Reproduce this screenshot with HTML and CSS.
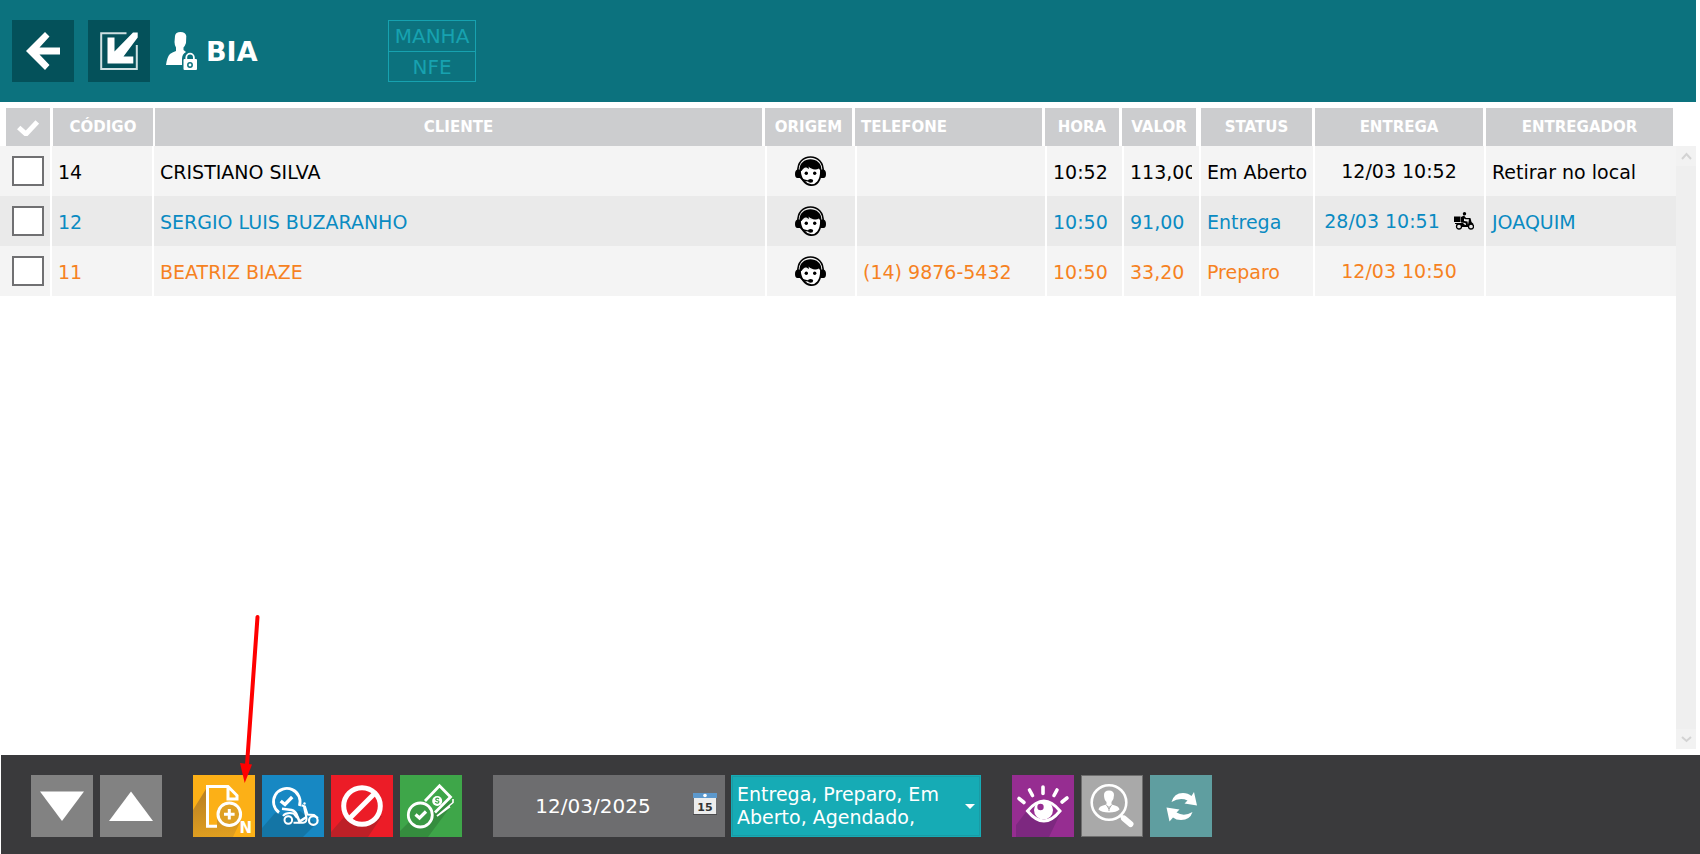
FILE: index.html
```html
<!DOCTYPE html>
<html lang="pt-BR">
<head>
<meta charset="utf-8">
<title>Pedidos</title>
<link rel="stylesheet" href="styles.css">
</head>
<body>
<svg class="defs" aria-hidden="true">
  <symbol id="attendant" viewBox="0 0 31 32">
    <path d="M3 16C1 -4 30 -4 28 16" fill="none" stroke="#000" stroke-width="1.600"/>
    <path d="M5 14C4.500 31 26.500 37 26 14" fill="#fff" stroke="#000" stroke-width="1.800"/>
    <path d="M4.800 15C3.500 7 10 3.200 15.500 3.200S27.500 7 26.200 15C25 14 24.500 13.500 24 12.500C20 14.500 16 13 13.500 10.500C14 12 14 12.500 13.500 13C10.500 10.500 9 11.500 6.500 15Z"/>
    <path d="M5 13.500v8.500H2.500Q0 22 0 18t2.500-4.500ZM26 13.500v8.500h2.500Q31 22 31 18t-2.500-4.500Z"/>
    <circle cx="11.300" cy="17.300" r="1.700"/><circle cx="19.700" cy="17.300" r="1.700"/>
    <path d="M5 21Q8 25.200 14 24.800" fill="none" stroke="#000" stroke-width="1.300"/>
    <ellipse cx="15.600" cy="24.800" rx="2.600" ry="1.900"/>
  </symbol>
</svg>

<header class="topbar">
  <button class="topbtn" aria-label="Voltar">
    <svg viewBox="0 0 62 62"><path fill="#fff" d="M14 31L33 12l4.500 4.500L27.500 27.500H48v7H27.500L37.500 45 33 50Z"/></svg>
  </button>
  <button class="topbtn" aria-label="Restaurar">
    <svg viewBox="0 0 62 62"><path d="M38.500 13.200H13.200V49H48.800V25" fill="none" stroke="#cfe0e2" stroke-width="2"/><path fill="#fff" d="M19.500 17.500h7v14L45 12.500h4.700V17.500L35.500 36.500h9.800v7H19.500Z"/></svg>
  </button>
  <div class="user">
    <svg class="user-icon" viewBox="0 0 31 38" aria-hidden="true">
      <path fill="#fff" d="M9 4Q9.500 0 14.500 0T20.300 4L20 11Q19 14 17.500 15.500V18L20 20Q16 22 16 27v6H0Q1 25 4 22Q6 20.500 10 19V15.500Q8.500 13 8.500 10Z"/>
      <path d="M20.300 28v-2.500a3.800 3.800 0 0 1 7.600 0V28" fill="none" stroke="#fff" stroke-width="1.800"/>
      <rect x="17.500" y="27" width="13.500" height="11" rx="1" fill="#fff"/>
      <circle cx="24" cy="33" r="2.200" fill="none" stroke="#0c727e" stroke-width="1.500"/>
    </svg>
    <strong class="user-name">BIA</strong>
  </div>
  <div class="shift"><span>MANHA</span><span>NFE</span></div>
</header>

<main class="main">
  <table class="orders">
    <colgroup>
      <col class="c-check"><col class="c-code"><col><col class="c-origin"><col class="c-wide"><col class="c-small"><col class="c-small"><col class="c-status"><col class="c-delivery"><col class="c-wide">
    </colgroup>
    <thead>
      <tr>
        <th><span class="h h-check"><svg viewBox="0 0 22 16" role="img" aria-label="Selecionar"><path d="M1.700 7.500L9 14L20.300 2" fill="none" stroke="#fff" stroke-width="5"/></svg></span></th>
        <th><span class="h h-code">CÓDIGO</span></th>
        <th><span class="h h-client">CLIENTE</span></th>
        <th><span class="h h-mid">ORIGEM</span></th>
        <th><span class="h h-mid h-left">TELEFONE</span></th>
        <th><span class="h h-mid">HORA</span></th>
        <th><span class="h h-mid">VALOR</span></th>
        <th><span class="h">STATUS</span></th>
        <th><span class="h">ENTREGA</span></th>
        <th><span class="h">ENTREGADOR</span></th>
      </tr>
    </thead>
    <tbody>
      <tr class="open">
        <td class="pick"><input type="checkbox" aria-label="Pedido 14"></td><td>14</td><td>CRISTIANO SILVA</td>
        <td class="origin"><svg><use href="#attendant"/></svg></td><td></td><td>10:52</td><td><span class="clip">113,00</span></td><td>Em Aberto</td>
        <td class="when"><span class="when-in">12/03 10:52</span></td><td>Retirar no local</td>
      </tr>
      <tr class="shipping">
        <td class="pick"><input type="checkbox" aria-label="Pedido 12"></td><td>12</td><td>SERGIO LUIS BUZARANHO</td>
        <td class="origin"><svg><use href="#attendant"/></svg></td><td></td><td>10:50</td><td><span class="clip">91,00</span></td><td>Entrega</td>
        <td class="when"><span class="when-in">28/03 10:51
          <svg class="moto" viewBox="0 0 20 18" aria-hidden="true"><path d="M0 4.500h6.500V10H0ZM7 5L10 3.500 12 6h4v1.300h-4.500L10 6.500V9l3.500.5.500 3.500h-2l-.5-2L7 10.500ZM1 11h8l2 2h3l1-6 1.500-1 1 4 2 2-2.500.5L15 15H7.500L6 12H1Z"/><circle cx="10.500" cy="1.700" r="1.700"/><circle cx="5" cy="14.500" r="2.500" fill="#eaeaea" stroke="#000" stroke-width="1.300"/><circle cx="17" cy="14.500" r="2.500" fill="#eaeaea" stroke="#000" stroke-width="1.300"/></svg>
        </span></td><td>JOAQUIM</td>
      </tr>
      <tr class="prep">
        <td class="pick"><input type="checkbox" aria-label="Pedido 11"></td><td>11</td><td>BEATRIZ BIAZE</td>
        <td class="origin"><svg><use href="#attendant"/></svg></td><td>(14) 9876-5432</td><td>10:50</td><td><span class="clip">33,20</span></td><td>Preparo</td>
        <td class="when"><span class="when-in">12/03 10:50</span></td><td></td>
      </tr>
    </tbody>
  </table>
  <div class="scrollbar" aria-hidden="true">
    <svg viewBox="0 0 20 20"><path d="M6 13l4.500-5L15 13" fill="none" stroke="#d3d3d3" stroke-width="2"/></svg>
    <svg viewBox="0 0 20 20"><path d="M6 8l4.500 4L15 8" fill="none" stroke="#d3d3d3" stroke-width="2"/></svg>
  </div>
</main>

<footer class="toolbar">
  <div class="group">
    <button class="tool gray" aria-label="Descer"><svg viewBox="0 0 62 62"><path fill="#fff" d="M9 16.500H53L31 46Z"/></svg></button>
    <button class="tool gray" aria-label="Subir"><svg viewBox="0 0 62 62"><path fill="#fff" d="M9 46H53L31 16.500Z"/></svg></button>
  </div>
  <div class="group">
    <div class="pointed">
      <button class="tool yellow" aria-label="Novo pedido">
        <svg viewBox="0 0 62 62">
          <defs><linearGradient id="gy" x1=".4" y1="0" x2=".5" y2="1"><stop offset="0" stop-color="#b87f24"/><stop offset="1" stop-color="#e09f20"/></linearGradient></defs>
          <path fill="url(#gy)" d="M13 14L0 35V62H40L48 45 36 28H14Z"/>
          <path fill="#fcb017" d="M15 12H34V24H44V34L24 34V51H15Z"/>
          <path d="M24 51.200H14.500V11.500H35L44 20.500V24H35V12" fill="none" stroke="#fff" stroke-width="3"/>
          <circle cx="36.300" cy="39.300" r="11.300" fill="#dfa024" stroke="#fff" stroke-width="3"/>
          <path d="M36.300 34v10.600M31 39.300h10.600" stroke="#fff" stroke-width="3"/>
        </svg>
        <span class="tag">N</span>
      </button>
      <svg class="pointer" viewBox="0 0 24 174" aria-hidden="true"><path d="M20.500 6L10 154" stroke="#f00" stroke-width="4" stroke-linecap="round"/><path fill="#f00" d="M3 152l12 1.500L7.700 172Z"/></svg>
    </div>
    <button class="tool blue" aria-label="Enviar para entrega">
      <svg viewBox="0 0 62 62">
        <path fill="#1475a5" d="M13 38L0 53V62H41L54 49 38 36Z"/>
        <circle cx="24.300" cy="27" r="14" fill="#1788c3"/>
        <path d="M17 37.500A13.300 13.300 0 1 1 37.400 31" fill="none" stroke="#fff" stroke-width="2.800"/>
        <path d="M18.700 26l4.300 3.500 7.200-7.500" fill="none" stroke="#fff" stroke-width="3.400"/>
        <path d="M20 33.800L29.500 35Q33.500 36 35 40.500L37.500 46.500 44.500 42" fill="none" stroke="#fff" stroke-width="2.600"/>
        <path d="M39.500 30.200L43 31.500 45.500 39.500 52 40 56 43" fill="none" stroke="#fff" stroke-width="2"/>
        <path d="M42 32L44.500 43Q45 47.500 41 47.800H31.500" fill="none" stroke="#fff" stroke-width="2"/>
        <path d="M21 41Q24 37 31.500 38.500L35 43" fill="none" stroke="#fff" stroke-width="2"/>
        <circle cx="26.300" cy="45" r="3.800" fill="none" stroke="#fff" stroke-width="2"/>
        <circle cx="51.300" cy="45.500" r="4.300" fill="none" stroke="#fff" stroke-width="2.200"/>
        <circle cx="42.500" cy="28.500" r="1.200" fill="#fff"/>
      </svg>
    </button>
    <button class="tool red" aria-label="Cancelar">
      <svg viewBox="0 0 62 62"><path fill="#bd2027" d="M13 42L0 57V62H37L51 41Z"/><circle cx="31" cy="31" r="18.300" fill="#ec1c27" stroke="#fff" stroke-width="5"/><path d="M19 43L43 19" stroke="#fff" stroke-width="5"/></svg>
    </button>
    <button class="tool green" aria-label="Receber">
      <svg viewBox="0 0 62 62">
        <path fill="#358d3e" d="M10 46L0 56V62H28L54 27 30 24Z"/>
        <path d="M25 26L39.500 10.800L50.500 22L35 37.500" fill="#3ea649" stroke="#fff" stroke-width="2.800"/>
        <path d="M53 24v3.500L37 41L50 31.500" fill="none" stroke="#fff" stroke-width="1.600"/>
        <circle cx="37.200" cy="26" r="5" fill="#fff"/>
        <path d="M39 24c-1.500-1.500-4-.5-3 .8s3.500.7 2.800 2.400-3 .8-3.600-.2" fill="none" stroke="#3ea649" stroke-width="1.200"/>
        <circle cx="20.300" cy="40" r="12" fill="#3a9944" stroke="#fff" stroke-width="2.800"/>
        <path d="M15.500 39.500l4 3.500 6.500-6.500" fill="none" stroke="#fff" stroke-width="3.200"/>
      </svg>
    </button>
  </div>
  <div class="group group-filter">
    <div class="date">
      <input class="date-text" type="text" value="12/03/2025" aria-label="Data">
      <button class="date-btn" aria-label="Abrir calendário">
        <svg viewBox="0 0 24 24"><rect x="1" y="1" width="22" height="21" fill="#eceded"/><rect x="0" y="1" width="24" height="5" fill="#5c98cc"/><circle cx="12" cy="3.500" r="1.800" fill="#fff"/><path d="M0 22.500h24" stroke="#4c4c4e"/><text x="12" y="19" text-anchor="middle" class="cal-num">15</text></svg>
      </button>
    </div>
    <div class="filter-box">
      <select class="filter" aria-label="Filtro de status"><option>Entrega, Preparo, Em Aberto, Agendado,</option></select>
      <svg class="caret" viewBox="0 0 10 6" aria-hidden="true"><path fill="#fff" d="M0 0h10L5 5Z"/></svg>
    </div>
  </div>
  <div class="group">
    <button class="tool purple" aria-label="Visualizar">
      <svg viewBox="0 0 62 62">
        <path fill="#7d2880" d="M14 37L4 50V62H37L49 37Z"/>
        <path d="M15.500 36Q32 16 48 36Q32 56 15.500 36Z" fill="#962d91" stroke="#fff" stroke-width="3"/>
        <circle cx="31.500" cy="35" r="9.500" fill="#fff"/><circle cx="28.500" cy="32" r="3.200" fill="#962d91"/>
        <path d="M7 23.500l5 4M17.500 15l3 5.500M31 12v6.500M45 15l-3 5.500M55 23l-5 4" stroke="#fff" stroke-width="3.600" stroke-linecap="round"/>
      </svg>
    </button>
    <button class="tool silver" aria-label="Buscar cliente">
      <svg viewBox="0 0 62 62">
        <circle cx="28" cy="27.500" r="17.300" fill="none" stroke="#fff" stroke-width="2.600"/>
        <path fill="#fff" d="M23 20q0-4.500 5-4.500t5 4.500-2.500 7v2.500Q38.500 31 38.500 34.500q-3 3-10.500 3t-10.500-3q0-3.500 8-5V27Q23 25 23 20Z"/>
        <path d="M25.500 30l2.500 4 2.500-4M28 31v5" fill="none" stroke="#a9a9a9" stroke-width="1"/>
        <path d="M39 40l4 3.500" stroke="#fff" stroke-width="3"/><path d="M43 43.500l6.500 5.500" stroke="#fff" stroke-width="6" stroke-linecap="round"/>
      </svg>
    </button>
    <button class="tool teal" aria-label="Atualizar">
      <svg viewBox="0 0 62 62"><path fill="#fff" d="M21.500 27Q24 18 33 18q5 0 8.500 3L44 17l3 13.500-12.500-2 3-3Q30 22 21.500 27ZM42.500 37Q40 45 31 45q-5 0-8-2.500L19.500 46.500 16.500 32.500 29.500 34.500l-3 3Q34 42 42.500 37Z"/></svg>
    </button>
  </div>
</footer>
</body>
</html>
```
FILE: styles.css
```css
* { box-sizing: border-box; }

body {
  margin: 0;
  min-height: 100vh;
  display: flex;
  flex-direction: column;
  background: #fff;
  color: #000;
  font: 19px/24px Verdana, "DejaVu Sans", sans-serif;
}

button, input, select { font: inherit; margin: 0; border: 0; padding: 0; border-radius: 0; }
button { cursor: pointer; }
svg { display: block; }
.defs { position: absolute; width: 0; height: 0; }

/* Top bar */
.topbar {
  display: flex;
  align-items: center;
  height: 102px;
  margin-right: 4px;
  padding-left: 12px;
  background: #0c727e;
}
.topbtn { width: 62px; height: 62px; margin-right: 14px; background: #04515a; }
.user { display: flex; align-items: center; gap: 9px; width: 224px; padding-left: 2px; }
.user-icon { width: 31px; height: 38px; }
.user-name { padding-top: 2px; color: #fff; font-size: 27px; line-height: 32px; }
.shift {
  width: 88px;
  border: 1px solid #17a2b0;
  color: #17a2b0;
  font-size: 20px;
  line-height: 30px;
  text-align: center;
}
.shift span { display: block; padding-top: 1px; line-height: 29px; }
.shift span + span { border-top: 1px solid #17a2b0; line-height: 28px; }

/* Orders */
.main { flex: 1; display: flex; align-items: flex-start; padding: 6px 4px 6px 0; }
.orders { flex: 1; width: 100%; border-collapse: collapse; table-layout: fixed; }
.c-check { width: 52px; }
.c-code { width: 102px; }
.c-origin { width: 90px; }
.c-wide { width: 190px; }
.c-small { width: 77px; }
.c-status { width: 114px; }
.c-delivery { width: 171px; }

.orders th { padding: 0; }
.h {
  display: block;
  height: 38px;
  margin: 0 3px 0 0;
  padding-top: 1px;
  background: #cccdcf;
  color: #fff;
  font-size: 15px;
  line-height: 37px;
}
.h-check { margin: 0 2px 0 6px; padding: 12px 11px; }
.h-check svg { width: 22px; height: 16px; }
.h-code { margin: 0 1px; }
.h-client { margin: 0 5px 0 1px; }
.h-mid { margin: 0 5px 0 -2px; }
.h-left { padding-left: 6px; text-align: left; }

.orders td {
  height: 50px;
  padding: 2px 0 0 6px;
  box-shadow: inset -2px 0 #fff;
  white-space: nowrap;
}
.orders td:last-child { box-shadow: none; }
.orders tbody tr { background: #f4f4f4; }
.orders tbody tr:nth-child(even) { background: #eaeaea; }
.orders .shipping { color: #0a8bc2; }
.orders .prep { color: #f6821f; }
.orders .pick { padding: 0 0 0 12px; }
.pick input {
  display: block;
  appearance: none;
  width: 32px;
  height: 30px;
  border: 2px solid #707072;
  background: #fff;
}
.orders .origin { padding: 1px 3px 0 0; }
.origin svg { width: 31px; height: 32px; margin: 0 auto; }
.clip { display: block; width: 62px; overflow: hidden; }
.orders .when { padding: 0 3px 0 0; }
.when-in { display: flex; align-items: center; justify-content: center; gap: 14px; }
.moto { width: 20px; height: 18px; }

.scrollbar {
  align-self: stretch;
  display: flex;
  flex-direction: column;
  justify-content: space-between;
  width: 20px;
  margin-top: 38px;
  background: #efefef;
}
.scrollbar svg { width: 20px; height: 20px; background: #f2f2f2; }

/* Toolbar */
.toolbar {
  display: flex;
  gap: 31px;
  margin-left: 1px;
  padding: 20px 30px 17px;
  background: #3a3a3c;
}
.group { display: flex; gap: 7px; }
.group-filter { gap: 6px; }
.tool { display: block; position: relative; width: 62px; height: 62px; }
.gray { background: #828282; }
.yellow { background: #fcb017; }
.blue { background: #1788c3; }
.red { background: #ec1c27; }
.green { background: #3ea649; }
.purple { background: #962d91; }
.silver { background: #a9a9a9; box-shadow: inset 0 0 0 1px #6e6e6e; }
.teal { background: #5f9ea0; }
.tag {
  position: absolute;
  right: 3px;
  bottom: 0;
  color: #fff;
  font-size: 15px;
  font-weight: bold;
  line-height: 18px;
}
.pointed { position: relative; }
.pointer { position: absolute; left: 44px; top: -164px; width: 24px; height: 174px; pointer-events: none; }

.date { display: flex; align-items: center; width: 232px; height: 62px; background: #6d6d6f; }
.date-text {
  flex: 1;
  min-width: 0;
  height: 62px;
  background: none;
  color: #fff;
  font-size: 20px;
  text-align: center;
}
.date-btn { width: 24px; height: 24px; margin: 0 8px 4px 0; background: none; }
.cal-num { fill: #333; font-size: 11px; font-weight: bold; }
.filter-box { position: relative; }
.filter {
  display: block;
  appearance: none;
  width: 250px;
  height: 62px;
  padding: 8px 36px 8px 6px;
  background: #16abb5;
  box-shadow: inset 0 0 0 1px #16abb5, inset 0 0 0 2px #1a9ba5;
  color: #fff;
  white-space: normal;
  line-height: 23px;
}
.caret { position: absolute; right: 6px; top: 29px; width: 10px; height: 6px; pointer-events: none; }
```
